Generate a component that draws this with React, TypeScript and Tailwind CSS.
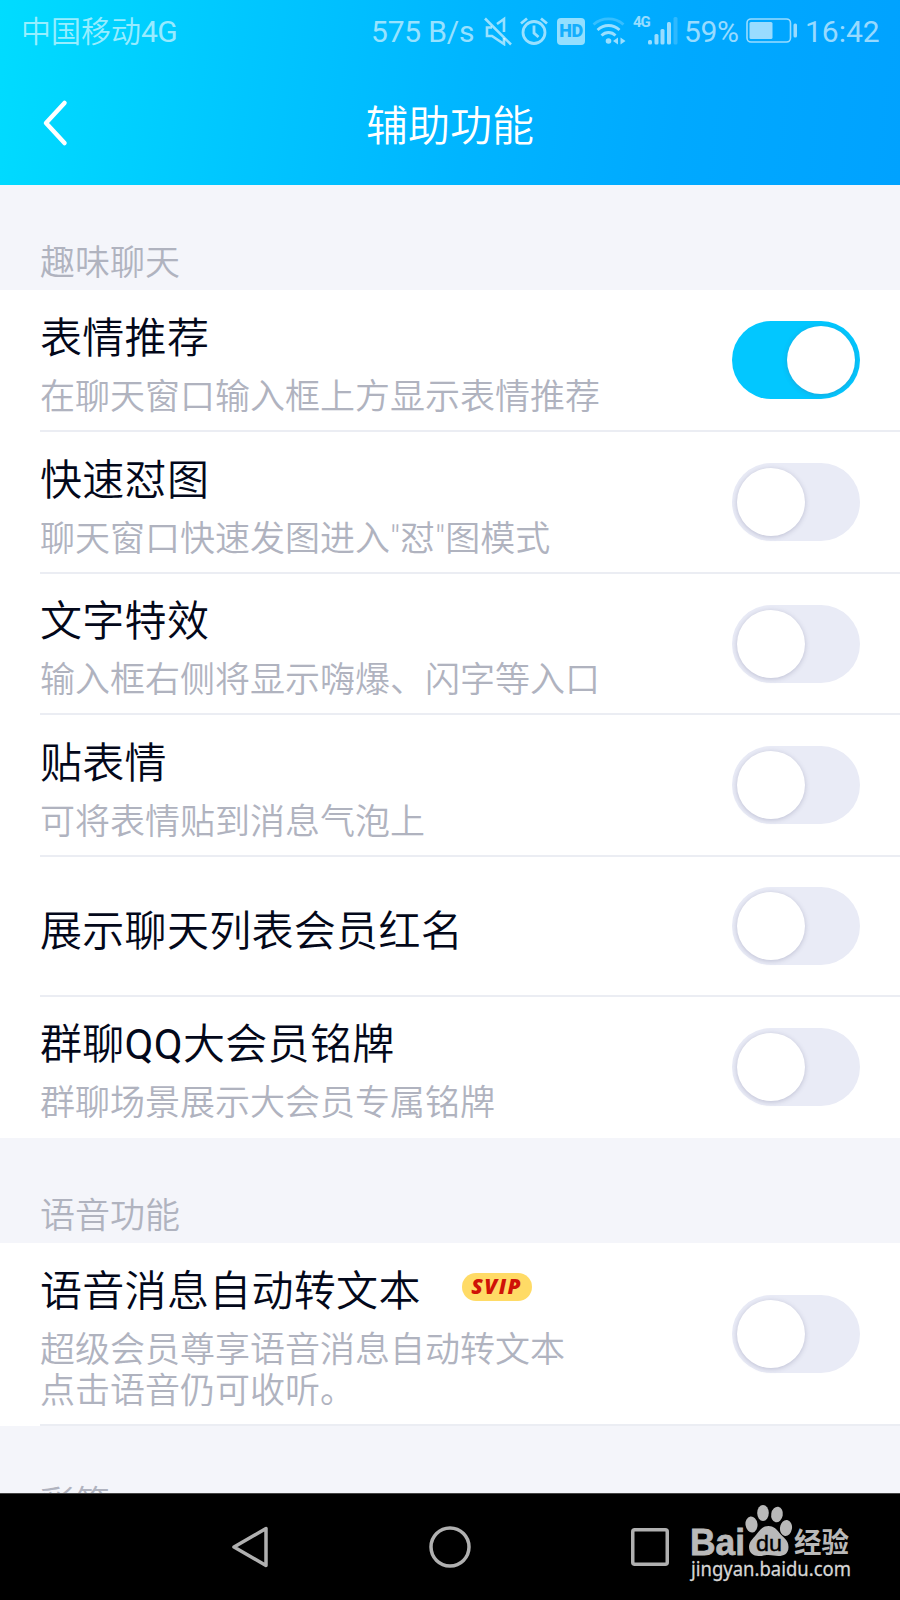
import React, { useState } from 'react';

interface Setting {
  id: string;
  title: React.ReactNode;
  desc?: string[];
  badge?: string;
  enabled?: boolean;
  height: string;
}

const CHAT_SETTINGS: Setting[] = [
  { id: 'recommend', title: '表情推荐', desc: ['在聊天窗口输入框上方显示表情推荐'], enabled: true, height: 'h-[142px]' },
  { id: 'quick', title: '快速怼图', desc: ['聊天窗口快速发图进入"怼"图模式'], height: 'h-[142px]' },
  { id: 'effects', title: '文字特效', desc: ['输入框右侧将显示嗨爆、闪字等入口'], height: 'h-[141px]' },
  { id: 'sticker', title: '贴表情', desc: ['可将表情贴到消息气泡上'], height: 'h-[142px]' },
  { id: 'redname', title: '展示聊天列表会员红名', height: 'h-[140px]' },
  {
    id: 'nameplate',
    title: <>群聊<span className="font-normal">QQ</span>大会员铭牌</>,
    desc: ['群聊场景展示大会员专属铭牌'],
    height: 'h-[141px]',
  },
];

const VOICE_SETTINGS: Setting[] = [
  {
    id: 'voice',
    title: '语音消息自动转文本',
    desc: ['超级会员尊享语音消息自动转文本', '点击语音仍可收听。'],
    badge: 'SVIP',
    height: 'h-[183px]',
  },
];

const StatusBar: React.FC = () => (
  <div className="flex h-[62px] items-center pl-[21px] text-[30px] leading-none text-white/60">
    <span className="w-[350px] pt-[2px] font-[350]">
      中国移动<span className="font-normal tracking-[-0.5px]">4G</span>
    </span>
    <span className="w-[112px] whitespace-nowrap pt-[2px] tracking-[-0.2px]">575 B/s</span>
    <svg width="30" height="30" viewBox="0 0 30 30" fill="none" stroke="currentColor" strokeWidth="2.600">
      <path d="M2 2.500 28 28.500" />
      <path d="M9 11.500H4v8.500h5L21 28V22M14 8l7-5v13" />
    </svg>
    <svg className="ml-[6px]" width="30" height="30" viewBox="0 0 30 30" fill="none" stroke="currentColor" strokeWidth="2.800">
      <circle cx="15" cy="16.500" r="11" />
      <path d="M15 9.500v7.500l4.500 4M2 7.500 8 2.500M22 2.500l6 5" />
    </svg>
    <span className="ml-[8px] flex h-[27px] w-[28px] items-center justify-center rounded-[4px] bg-[#93dfff] text-[18px] font-black tracking-[-0.5px] text-[#14aefd]">
      HD
    </span>
    <svg className="ml-[7px]" width="36" height="30" viewBox="0 0 36 30" fill="none" stroke="currentColor" strokeWidth="2.800">
      <path d="M1.500 8.500C10 1 23 1 31.500 8.500" opacity=".35" />
      <path d="M5.500 14C12 8 21 8 27.500 14" />
      <path d="M9.500 19.500C13.500 15.500 19.500 15.500 23.500 19.500" />
      <circle cx="16.500" cy="25" r="2.800" fill="currentColor" stroke="none" />
      <path d="M26 21.500v7l-5-3.500zM28.500 21.500v7l5-3.500z" fill="currentColor" stroke="none" />
    </svg>
    <span className="ml-[5px] w-[15px] self-start pt-[15px] text-[15px] font-bold leading-none tracking-[-1px]">4G</span>
    <svg width="30" height="30" viewBox="0 0 30 30" fill="currentColor">
      <rect x="0" y="24" width="4" height="4.500" rx="1.500" />
      <rect x="6.500" y="18" width="4" height="10.500" rx="1.500" />
      <rect x="12.500" y="13" width="4" height="15.500" rx="1.500" />
      <rect x="19" y="6" width="4" height="22.500" rx="1.500" />
      <rect x="25.500" y="1" width="4" height="27.500" rx="1.500" opacity=".3" />
    </svg>
    <span className="ml-[6px] w-[62px] pt-[2px] tracking-[-0.4px]">59%</span>
    <svg width="52" height="26" viewBox="0 0 52 26" fill="none" stroke="currentColor">
      <rect x="1" y="1" width="43.500" height="23" rx="4" strokeWidth="1.600" />
      <rect x="3.500" y="4" width="23" height="17" rx="1.500" fill="currentColor" stroke="none" />
      <rect x="47.500" y="5.500" width="3.500" height="14" rx="1.500" fill="currentColor" stroke="none" />
    </svg>
    <span className="ml-[7px] pt-[2px]">16:42</span>
  </div>
);

const Header: React.FC = () => (
  <header className="h-[185px] shrink-0 bg-[linear-gradient(98deg,#00dcff_0%,#00c6ff_28%,#00b5ff_52%,#00a9ff_75%,#00a2ff_100%)]">
    <StatusBar />
    <div className="grid h-[123px] grid-cols-[1fr_auto_1fr] items-center text-white">
      <button className="-mt-[2px] ml-[39px] w-[32px]">
        <svg width="32" height="50" viewBox="0 0 32 50" fill="none" stroke="currentColor" strokeWidth="4.500" strokeLinecap="round" strokeLinejoin="round">
          <path d="M25.500 5 7 25 25.500 45" />
        </svg>
      </button>
      <h1 className="pt-[7px] text-[42px] font-[350] leading-[60px]">辅助功能</h1>
    </div>
  </header>
);

const SectionTitle: React.FC<{ children: React.ReactNode }> = ({ children }) => (
  <h2 className="h-[105px] pl-[40px] pt-[58px] text-[35px] font-[350] leading-[41px] text-[#b0b3bf]">{children}</h2>
);

const Toggle: React.FC<{ on: boolean; onChange: () => void }> = ({ on, onChange }) => (
  <button
    role="switch"
    aria-checked={on}
    onClick={onChange}
    className={`flex h-[78px] w-[128px] shrink-0 items-center rounded-full px-[5px] ${
      on ? 'justify-end bg-[#02c7ff]' : 'justify-start bg-[#e9ebf6]'
    }`}
  >
    <span className="size-[68px] rounded-full bg-white shadow-[0_1px_5px_rgba(90,90,130,0.3)]" />
  </button>
);

const SettingRow: React.FC<{ setting: Setting }> = ({ setting }) => {
  const [on, setOn] = useState(!!setting.enabled);

  return (
    <li className={`group ${setting.height} pl-[40px]`}>
      <div className="flex h-full items-center justify-between border-b-2 border-[#ebedf3] pr-[40px] group-[&:last-child:not(:first-child)]:border-white">
        <div className={setting.desc ? 'pt-[6px]' : 'pt-[11px]'}>
          <div className="flex items-center">
            <span className="text-[42px] font-[350] leading-[60px] tracking-[0.3px] text-[#03081a]">{setting.title}</span>
            {setting.badge && (
              <span className="-mt-[10px] ml-[41px] flex h-[28px] w-[70px] items-center justify-center rounded-full bg-[#ffdb66] font-['Open_Sans',sans-serif] text-[21px] font-extrabold italic tracking-[1.500px] text-[#cf1207]">
                {setting.badge}
              </span>
            )}
          </div>
          {setting.desc?.map((line) => (
            <p key={line} className="text-[35px] font-[350] leading-[41px] text-[#b0b3bf] first-of-type:mt-[8px]">
              {line}
            </p>
          ))}
        </div>
        <Toggle on={on} onChange={() => setOn(!on)} />
      </div>
    </li>
  );
};

const Watermark: React.FC = () => (
  <svg className="absolute left-[685px] top-[8px]" width="175" height="90" viewBox="685 1501 175 90" fill="#b9b9b9">
    <text x="690" y="1554" fontFamily="Liberation Sans, sans-serif" fontWeight="700" fontSize="37" textLength="55" lengthAdjust="spacingAndGlyphs" stroke="#b9b9b9" strokeWidth=".8">
      Bai
    </text>
    <ellipse cx="751.500" cy="1523.500" rx="6" ry="8" transform="rotate(-8 751.500 1523.500)" />
    <ellipse cx="763" cy="1512" rx="5.800" ry="8" />
    <ellipse cx="777" cy="1513.500" rx="5.800" ry="7.800" transform="rotate(10 777 1513.500)" />
    <ellipse cx="786" cy="1527" rx="6" ry="8" transform="rotate(8 786 1527)" />
    <path d="M768.500 1525c5 0 8 3 11 7 4 5 9 7 9 14s-5 9-10 9c-4 0-6-1-10-1s-6 1-10 1c-5 0-9.500-3-9.500-9s5-9 8.500-14c3-4 6-7 11-7z" />
    <text x="756" y="1550" fontFamily="Liberation Sans, sans-serif" fontSize="22" textLength="26" lengthAdjust="spacingAndGlyphs" fill="#000" stroke="#000" strokeWidth=".4">
      du
    </text>
    <text x="794" y="1552" fontFamily="Noto Sans CJK SC, sans-serif" fontWeight="700" fontSize="28" textLength="55" lengthAdjust="spacingAndGlyphs">
      经验
    </text>
    <text x="691" y="1575" fontFamily="Noto Sans, sans-serif" fontSize="20" textLength="160" lengthAdjust="spacingAndGlyphs" fill="#d6d6d6" stroke="#d6d6d6" strokeWidth=".3">
      jingyan.baidu.com
    </text>
  </svg>
);

const NavBar: React.FC = () => (
  <nav className="relative flex h-[107px] shrink-0 items-center border-t border-[#444] bg-black pl-[230px] text-[#b0b0b0]">
    <svg width="40" height="44" viewBox="0 0 40 44" fill="none" stroke="currentColor" strokeWidth="3.500" strokeLinejoin="round">
      <path d="M36 3.500v37L4 22z" />
    </svg>
    <svg className="ml-[158px]" width="44" height="44" viewBox="0 0 44 44" fill="none" stroke="currentColor" strokeWidth="3.500">
      <circle cx="22" cy="22" r="19" />
    </svg>
    <svg className="ml-[159px]" width="38" height="38" viewBox="0 0 38 38" fill="none" stroke="currentColor" strokeWidth="3.500">
      <rect x="1.750" y="1.750" width="34.500" height="34.500" rx="2" />
    </svg>
    <Watermark />
  </nav>
);

const App: React.FC = () => {
  return (
    <div className="flex h-[1600px] w-[900px] flex-col overflow-hidden bg-[#f4f5fa] font-[Roboto,'Noto_Sans_CJK_SC',sans-serif]">
      <Header />
      <main className="min-h-0 flex-1 overflow-hidden">
        <SectionTitle>趣味聊天</SectionTitle>
        <ul className="bg-white">
          {CHAT_SETTINGS.map((s) => (
            <SettingRow key={s.id} setting={s} />
          ))}
        </ul>
        <SectionTitle>语音功能</SectionTitle>
        <ul className="bg-white">
          {VOICE_SETTINGS.map((s) => (
            <SettingRow key={s.id} setting={s} />
          ))}
        </ul>
        <SectionTitle>彩签</SectionTitle>
      </main>
      <NavBar />
    </div>
  );
};

export default App;
